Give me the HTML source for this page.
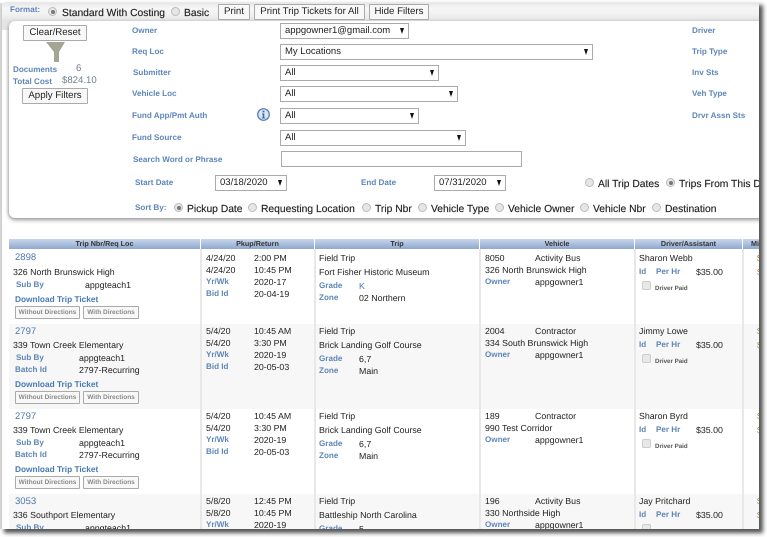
<!DOCTYPE html>
<html><head><meta charset="utf-8"><style>
html,body{margin:0;padding:0;background:#fff;width:767px;height:537px;overflow:hidden}
body{font-family:"Liberation Sans",Arial,sans-serif;position:relative;text-rendering:geometricPrecision}
#w{position:absolute;left:2px;top:3px;width:757px;height:526px;background:#fff;overflow:hidden;box-shadow:3px 3px 4px 1px #555;}
#e{position:absolute;left:-2px;top:-3px;width:767px;height:537px;filter:blur(.3px)}
#edge{position:absolute;left:0;top:3px;width:2px;height:526px;background:#ddd}
#band{position:absolute;left:0;top:0;width:767px;height:30px;background:linear-gradient(#ddd,#f6f6f6 8px,#f2f2f2 14px,#e4e4e4 21px)}
#panel{position:absolute;left:9px;top:21px;width:800px;height:197px;background:#fff;border-radius:6px 0 0 6px;box-shadow:0 2px 4px #999,-1px 0 2px #ccc}
.t,.l,.h,.b,.o,.s,.r,.c{position:absolute;box-sizing:border-box}
.t{font-size:8.8px;line-height:12px;color:#222;white-space:nowrap}
.l{font-size:8.1px;line-height:12px;color:#5f86b9;font-weight:bold;white-space:nowrap}
.o{font-size:10.3px;line-height:12px;color:#222;white-space:nowrap;-webkit-text-stroke:.15px #222}
.g{color:#6f7f8f;font-size:9.6px}.n{font-size:9.5px;color:#4a78ae}
.d{font-size:8.3px;color:#4a7ab5}
.b{height:16px;border:1px solid #aaa;border-radius:1px;background:#f8f8f8;font-size:9.7px;line-height:14px;text-align:center;color:#222}
.m{height:13px;background:#f8f8f8;border-color:#aaa;font-size:6.5px;font-weight:bold;line-height:11px;color:#8a8a8a}
.s{height:16px;border:1px solid #aaa;background:#fff;font-size:9.5px;line-height:14px;padding-left:4px;color:#222}
.a:after{content:"";position:absolute;right:4px;top:4px;border:3px solid transparent;border-top:6px solid #111;border-bottom:0;border-left-width:2.5px;border-right-width:2.5px}
.r{width:9px;height:9px;border-radius:50%;background:#e6e6e6;border:1px solid #bbb}
.r.on:after{content:"";position:absolute;left:1.5px;top:1.5px;width:4px;height:4px;border-radius:50%;background:#777}
.h{top:239px;height:10px;background:linear-gradient(#c8d6ec,#8fa8cf);font-size:7.2px;font-weight:bold;line-height:10px;text-align:center;color:#333}
.row{position:absolute;left:9px;width:750px}
.v{position:absolute;top:249px;width:2px;height:290px;background:#e8e8e8}
.c{width:9px;height:9px;background:#e8e8e8;border:1px solid #ccc;border-radius:2px}
.p{position:absolute;left:655px;font-size:6.2px;line-height:8px;color:#555;font-weight:bold;white-space:nowrap}
</style></head><body>
<div id="edge"></div>
<div id="w"><div id="e">
<div id="band"></div>
<div id="panel"></div>

<div class="l" style="left:10px;top:4px">Format:</div>
<div class="r on" style="left:48px;top:7px"></div><div class="o" style="left:62px;top:8px">Standard With Costing</div>
<div class="r" style="left:171px;top:7px"></div><div class="o" style="left:184px;top:8px">Basic</div>
<div class="b" style="left:218px;top:4px;width:32px">Print</div>
<div class="b" style="left:254px;top:4px;width:111px">Print Trip Tickets for All</div>
<div class="b" style="left:369px;top:4px;width:60px">Hide Filters</div>

<div class="b" style="left:23px;top:25px;width:64px">Clear/Reset</div>
<svg style="position:absolute;left:45px;top:41px" width="22" height="22"><path d="M1 1H20L14 11V21H9V11Z" fill="#a5a594"/></svg>
<div class="l" style="left:13px;top:64px">Documents</div><div class="t g" style="left:76px;top:63px">6</div>
<div class="l" style="left:13px;top:76px">Total Cost</div><div class="t g" style="left:62px;top:75px">$824.10</div>
<div class="b" style="left:22px;top:88px;width:66px">Apply Filters</div>

<div class="l" style="left:132px;top:25px">Owner</div>
<div class="l" style="left:132px;top:46px">Req Loc</div>
<div class="l" style="left:133px;top:67px">Submitter</div>
<div class="l" style="left:132px;top:88px">Vehicle Loc</div>
<div class="l" style="left:132px;top:110px">Fund App/Pmt Auth</div>
<div class="l" style="left:132px;top:132px">Fund Source</div>
<div class="l" style="left:133px;top:154px">Search Word or Phrase</div>
<div class="l" style="left:135px;top:177px">Start Date</div>
<div class="l" style="left:361px;top:177px">End Date</div>
<div class="l" style="left:135px;top:202px">Sort By:</div>
<div class="l" style="left:692px;top:25px">Driver</div>
<div class="l" style="left:692px;top:46px">Trip Type</div>
<div class="l" style="left:692px;top:67px">Inv Sts</div>
<div class="l" style="left:692px;top:88px">Veh Type</div>
<div class="l" style="left:692px;top:110px">Drvr Assn Sts</div>

<svg style="position:absolute;left:257px;top:108px" width="13" height="13"><circle cx="6.5" cy="6.5" r="5.8" fill="#dbe6f4" stroke="#4a7ab5" stroke-width="1.2"/><rect x="5.6" y="2.6" width="1.8" height="1.8" fill="#3a6aa5"/><path d="M5 5.5H7.3V9.6H8.2V10.5H4.8V9.6H5.7V6.4H5Z" fill="#3a6aa5"/></svg>

<div class="s a" style="left:280px;top:23px;width:129px">appgowner1@gmail.com</div>
<div class="s a" style="left:280px;top:44px;width:313px">My Locations</div>
<div class="s a" style="left:280px;top:65px;width:159px">All</div>
<div class="s a" style="left:280px;top:86px;width:178px">All</div>
<div class="s a" style="left:280px;top:108px;width:139px">All</div>
<div class="s a" style="left:280px;top:130px;width:186px">All</div>
<div class="s" style="left:281px;top:151px;width:241px"></div>
<div class="s a" style="left:215px;top:175px;width:72px">03/18/2020</div>
<div class="s a" style="left:434px;top:175px;width:72px">07/31/2020</div>

<div class="r" style="left:585px;top:178px"></div><div class="o" style="left:598px;top:179px">All Trip Dates</div>
<div class="r on" style="left:666px;top:178px"></div><div class="o" style="left:679px;top:179px">Trips From This Date</div>

<div class="r on" style="left:174px;top:203px"></div><div class="o" style="left:187px;top:204px">Pickup Date</div>
<div class="r" style="left:248px;top:203px"></div><div class="o" style="left:261px;top:204px">Requesting Location</div>
<div class="r" style="left:362px;top:203px"></div><div class="o" style="left:375px;top:204px">Trip Nbr</div>
<div class="r" style="left:418px;top:203px"></div><div class="o" style="left:431px;top:204px">Vehicle Type</div>
<div class="r" style="left:495px;top:203px"></div><div class="o" style="left:508px;top:204px">Vehicle Owner</div>
<div class="r" style="left:580px;top:203px"></div><div class="o" style="left:593px;top:204px">Vehicle Nbr</div>
<div class="r" style="left:652px;top:203px"></div><div class="o" style="left:665px;top:204px">Destination</div>

<div class="h" style="left:9px;width:191px">Trip Nbr/Req Loc</div>
<div class="h" style="left:201px;width:113px">Pkup/Return</div>
<div class="h" style="left:315px;width:164px">Trip</div>
<div class="h" style="left:480px;width:154px">Vehicle</div>
<div class="h" style="left:635px;width:107px">Driver/Assistant</div>
<div class="h" style="left:743px;width:20px;text-align:left;padding-left:8px">Mi</div>

<div class="row" style="top:324px;height:85px;background:#f7f7f7"></div>
<div class="row" style="top:494px;height:40px;background:#f7f7f7"></div>
<div class="v" style="left:200px"></div><div class="v" style="left:314px"></div><div class="v" style="left:479px"></div><div class="v" style="left:634px"></div><div class="v" style="left:742px"></div>

<!-- row 1 -->
<div class="t n" style="left:15px;top:252px">2898</div>
<div class="t" style="left:13px;top:266px">326 North Brunswick High</div>
<div class="l" style="left:16px;top:279px">Sub By</div><div class="t" style="left:85px;top:279px">appgteach1</div>
<div class="l d" style="left:15px;top:293px">Download Trip Ticket</div>
<div class="b m" style="left:15px;top:306px;width:65px">Without Directions</div>
<div class="b m" style="left:83px;top:306px;width:56px">With Directions</div>
<div class="t" style="left:206px;top:252px">4/24/20</div><div class="t" style="left:254px;top:252px">2:00 PM</div>
<div class="t" style="left:206px;top:264px">4/24/20</div><div class="t" style="left:254px;top:264px">10:45 PM</div>
<div class="l" style="left:206px;top:276px">Yr/Wk</div><div class="t" style="left:254px;top:276px">2020-17</div>
<div class="l" style="left:206px;top:288px">Bid Id</div><div class="t" style="left:254px;top:288px">20-04-19</div>
<div class="t" style="left:319px;top:252px">Field Trip</div>
<div class="t" style="left:319px;top:266px">Fort Fisher Historic Museum</div>
<div class="l" style="left:319px;top:280px">Grade</div><div class="t" style="left:359px;top:280px;color:#3f74b4">K</div>
<div class="l" style="left:319px;top:292px">Zone</div><div class="t" style="left:359px;top:292px">02 Northern</div>
<div class="t" style="left:485px;top:252px">8050</div><div class="t" style="left:535px;top:252px">Activity Bus</div>
<div class="t" style="left:485px;top:264px">326 North Brunswick High</div>
<div class="l" style="left:485px;top:276px">Owner</div><div class="t" style="left:535px;top:276px">appgowner1</div>
<div class="t" style="left:639px;top:252px">Sharon Webb</div>
<div class="l" style="left:639px;top:266px">Id</div><div class="l" style="left:656px;top:266px">Per Hr</div><div class="t" style="left:696px;top:266px">$35.00</div>
<div class="c" style="left:642px;top:281px"></div><div class="p" style="top:285px">Driver Paid</div>

<!-- row 2 -->
<div class="t n" style="left:15px;top:326px">2797</div>
<div class="t" style="left:13px;top:339px">339 Town Creek Elementary</div>
<div class="l" style="left:16px;top:352px">Sub By</div><div class="t" style="left:79px;top:352px">appgteach1</div>
<div class="l" style="left:15px;top:364px">Batch Id</div><div class="t" style="left:79px;top:364px">2797-Recurring</div>
<div class="l d" style="left:15px;top:378px">Download Trip Ticket</div>
<div class="b m" style="left:15px;top:391px;width:65px">Without Directions</div>
<div class="b m" style="left:83px;top:391px;width:56px">With Directions</div>
<div class="t" style="left:206px;top:325px">5/4/20</div><div class="t" style="left:254px;top:325px">10:45 AM</div>
<div class="t" style="left:206px;top:337px">5/4/20</div><div class="t" style="left:254px;top:337px">3:30 PM</div>
<div class="l" style="left:206px;top:349px">Yr/Wk</div><div class="t" style="left:254px;top:349px">2020-19</div>
<div class="l" style="left:206px;top:361px">Bid Id</div><div class="t" style="left:254px;top:361px">20-05-03</div>
<div class="t" style="left:319px;top:325px">Field Trip</div>
<div class="t" style="left:319px;top:339px">Brick Landing Golf Course</div>
<div class="l" style="left:319px;top:353px">Grade</div><div class="t" style="left:359px;top:353px">6,7</div>
<div class="l" style="left:319px;top:365px">Zone</div><div class="t" style="left:359px;top:365px">Main</div>
<div class="t" style="left:485px;top:325px">2004</div><div class="t" style="left:535px;top:325px">Contractor</div>
<div class="t" style="left:485px;top:337px">334 South Brunswick High</div>
<div class="l" style="left:485px;top:349px">Owner</div><div class="t" style="left:535px;top:349px">appgowner1</div>
<div class="t" style="left:639px;top:325px">Jimmy Lowe</div>
<div class="l" style="left:639px;top:339px">Id</div><div class="l" style="left:656px;top:339px">Per Hr</div><div class="t" style="left:696px;top:339px">$35.00</div>
<div class="c" style="left:642px;top:354px"></div><div class="p" style="top:358px">Driver Paid</div>

<!-- row 3 -->
<div class="t n" style="left:15px;top:411px">2797</div>
<div class="t" style="left:13px;top:424px">339 Town Creek Elementary</div>
<div class="l" style="left:16px;top:437px">Sub By</div><div class="t" style="left:79px;top:437px">appgteach1</div>
<div class="l" style="left:15px;top:449px">Batch Id</div><div class="t" style="left:79px;top:449px">2797-Recurring</div>
<div class="l d" style="left:15px;top:463px">Download Trip Ticket</div>
<div class="b m" style="left:15px;top:476px;width:65px">Without Directions</div>
<div class="b m" style="left:83px;top:476px;width:56px">With Directions</div>
<div class="t" style="left:206px;top:410px">5/4/20</div><div class="t" style="left:254px;top:410px">10:45 AM</div>
<div class="t" style="left:206px;top:422px">5/4/20</div><div class="t" style="left:254px;top:422px">3:30 PM</div>
<div class="l" style="left:206px;top:434px">Yr/Wk</div><div class="t" style="left:254px;top:434px">2020-19</div>
<div class="l" style="left:206px;top:446px">Bid Id</div><div class="t" style="left:254px;top:446px">20-05-03</div>
<div class="t" style="left:319px;top:410px">Field Trip</div>
<div class="t" style="left:319px;top:424px">Brick Landing Golf Course</div>
<div class="l" style="left:319px;top:438px">Grade</div><div class="t" style="left:359px;top:438px">6,7</div>
<div class="l" style="left:319px;top:450px">Zone</div><div class="t" style="left:359px;top:450px">Main</div>
<div class="t" style="left:485px;top:410px">189</div><div class="t" style="left:535px;top:410px">Contractor</div>
<div class="t" style="left:485px;top:422px">990 Test Corridor</div>
<div class="l" style="left:485px;top:434px">Owner</div><div class="t" style="left:535px;top:434px">appgowner1</div>
<div class="t" style="left:639px;top:410px">Sharon Byrd</div>
<div class="l" style="left:639px;top:424px">Id</div><div class="l" style="left:656px;top:424px">Per Hr</div><div class="t" style="left:696px;top:424px">$35.00</div>
<div class="c" style="left:642px;top:439px"></div><div class="p" style="top:443px">Driver Paid</div>

<!-- row 4 -->
<div class="t n" style="left:15px;top:496px">3053</div>
<div class="t" style="left:13px;top:509px">336 Southport Elementary</div>
<div class="l" style="left:16px;top:522px">Sub By</div><div class="t" style="left:85px;top:522px">appgteach1</div>
<div class="t" style="left:206px;top:495px">5/8/20</div><div class="t" style="left:254px;top:495px">12:45 PM</div>
<div class="t" style="left:206px;top:507px">5/8/20</div><div class="t" style="left:254px;top:507px">10:45 PM</div>
<div class="l" style="left:206px;top:519px">Yr/Wk</div><div class="t" style="left:254px;top:519px">2020-19</div>
<div class="t" style="left:319px;top:495px">Field Trip</div>
<div class="t" style="left:319px;top:509px">Battleship North Carolina</div>
<div class="l" style="left:319px;top:523px">Grade</div><div class="t" style="left:359px;top:523px">5</div>
<div class="t" style="left:485px;top:495px">196</div><div class="t" style="left:535px;top:495px">Activity Bus</div>
<div class="t" style="left:485px;top:507px">330 Northside High</div>
<div class="l" style="left:485px;top:519px">Owner</div><div class="t" style="left:535px;top:519px">appgowner1</div>
<div class="t" style="left:639px;top:495px">Jay Pritchard</div>
<div class="l" style="left:639px;top:509px">Id</div><div class="l" style="left:656px;top:509px">Per Hr</div><div class="t" style="left:696px;top:509px">$35.00</div>
<div class="c" style="left:642px;top:524px"></div>

<div class="t" style="left:757px;top:252px;color:#c8552a">$</div><div class="t" style="left:757px;top:266px;color:#a58a3a">$</div>
<div class="t" style="left:757px;top:325px;color:#a58a3a">$</div><div class="t" style="left:757px;top:339px;color:#a58a3a">$</div>
<div class="t" style="left:757px;top:410px;color:#a58a3a">$</div><div class="t" style="left:757px;top:424px;color:#a58a3a">$</div>
<div class="t" style="left:757px;top:495px;color:#a58a3a">$</div><div class="t" style="left:757px;top:509px;color:#a58a3a">$</div>
</div></div>
</body></html>
